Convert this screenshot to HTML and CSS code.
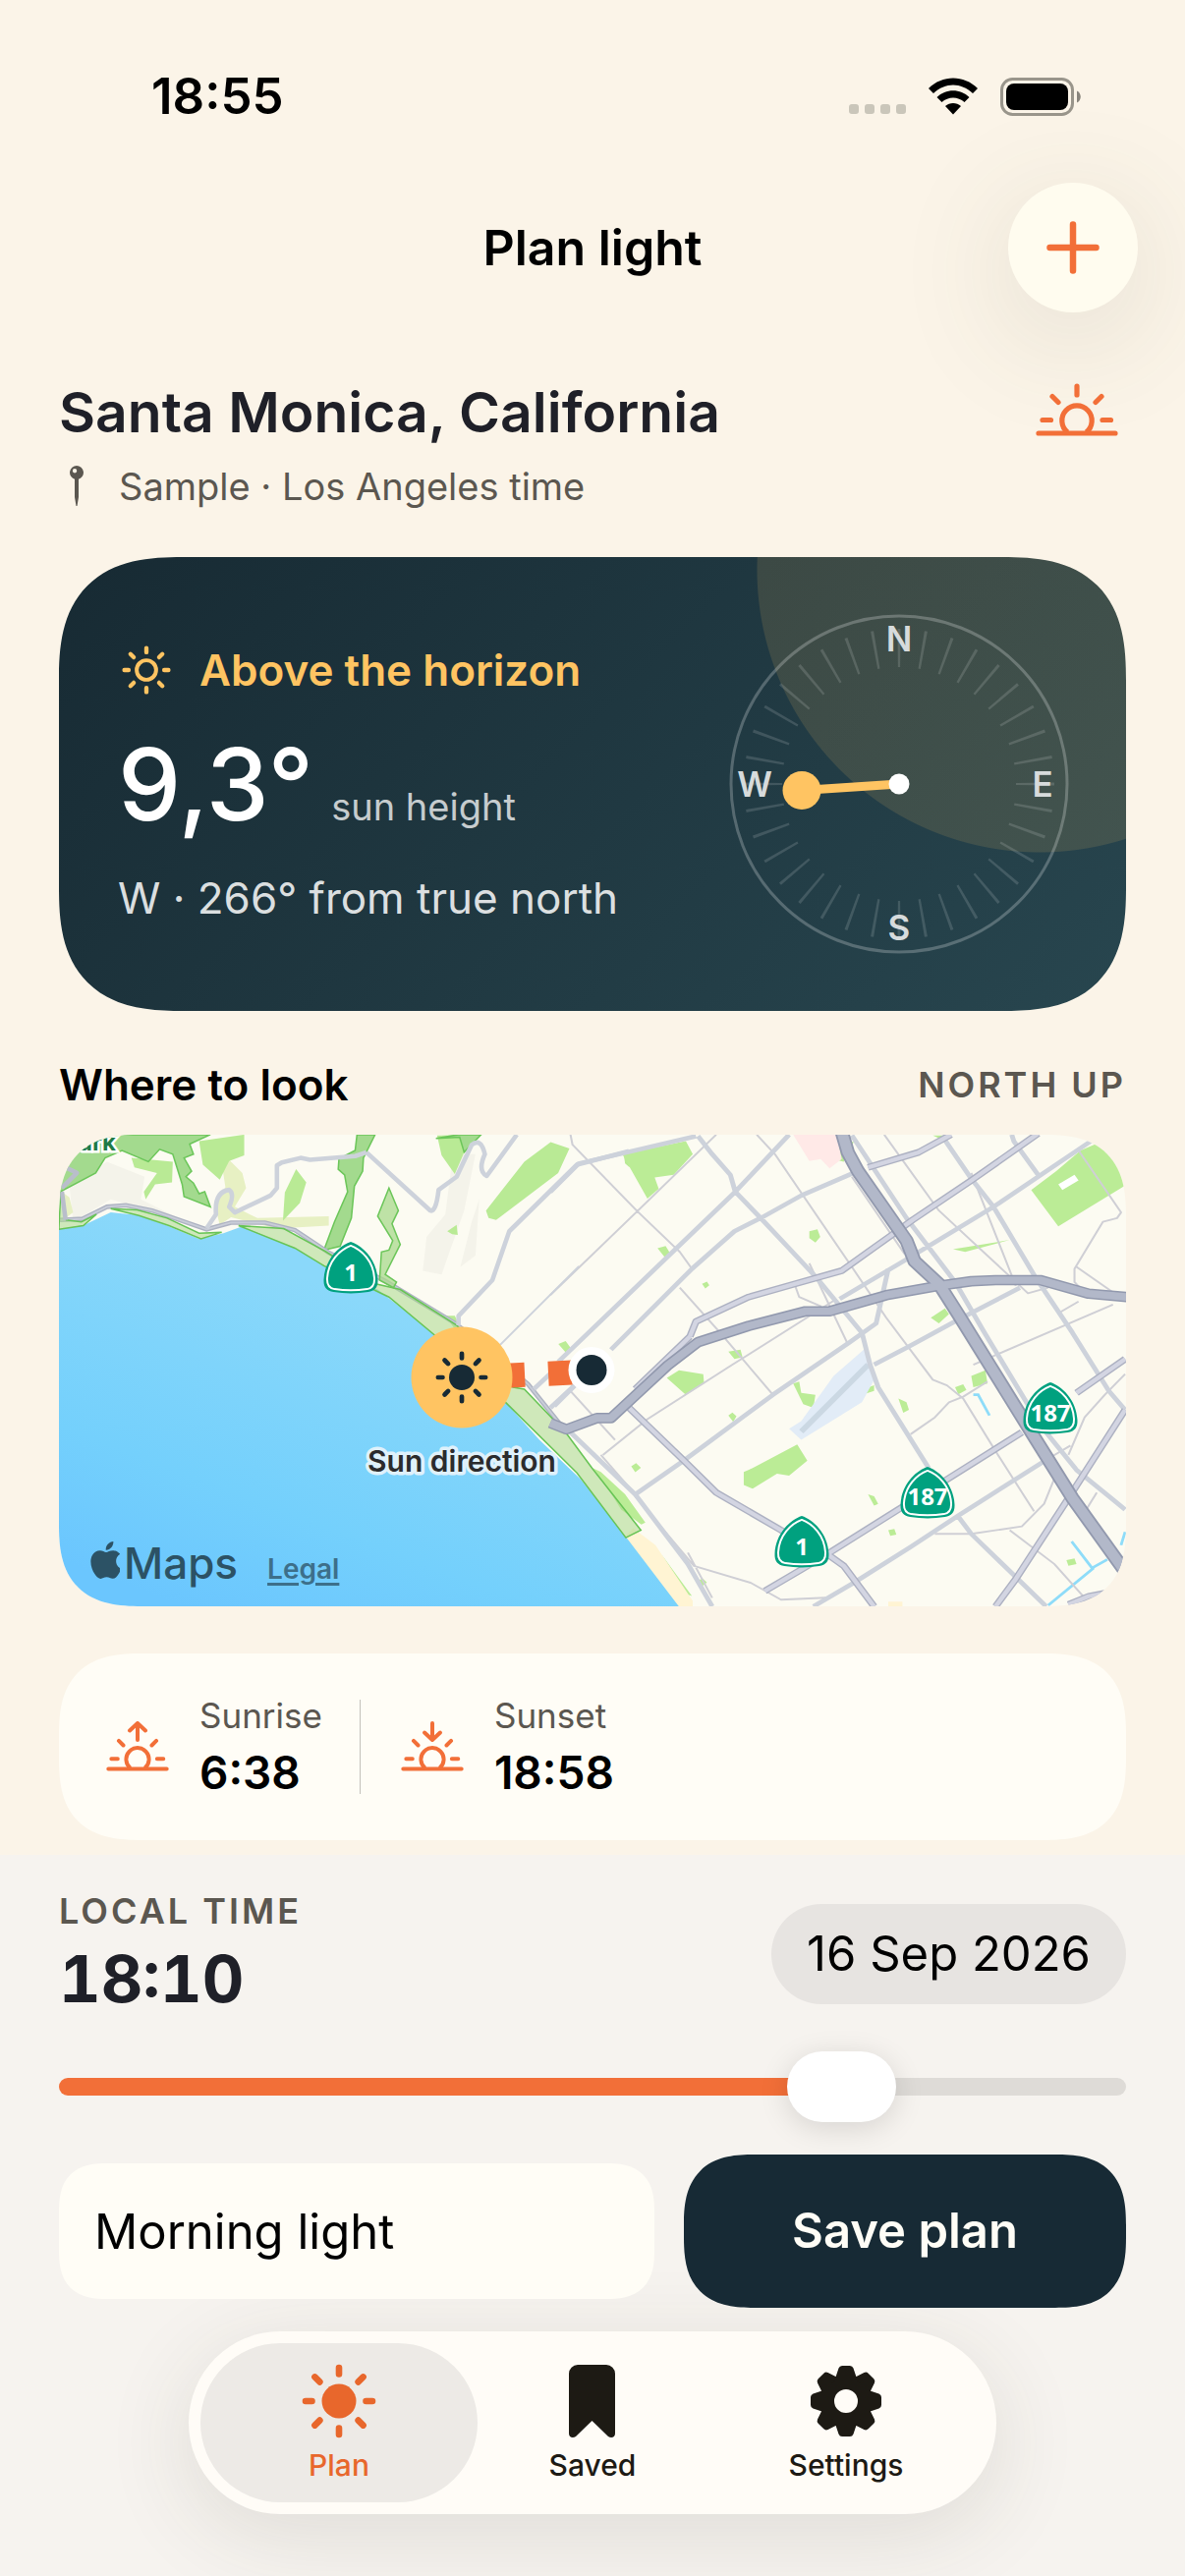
FILE: index.html
```html
<!DOCTYPE html>
<html lang="en">
<head>
<meta charset="utf-8">
<meta name="viewport" content="width=device-width, initial-scale=1">
<title>Plan light</title>
<link rel="stylesheet" href="styles.css">
</head>
<body>
<svg class="defs" aria-hidden="true">
  <defs>
    <symbol id="sun-rays" viewBox="0 0 76 76">
      <g fill="none" stroke="currentColor" stroke-width="6.6" stroke-linecap="round">
        <path d="M38 4v6.500M38 65.500v6.500M4 38h6.500M65.500 38h6.500M13.400 13.400l5 5M57.600 57.600l5 5M13.400 62.600l5-5M57.600 18.400l5-5"/>
      </g>
    </symbol>
    <symbol id="half-sun" viewBox="0 0 84 44">
      <g fill="none" stroke="currentColor" stroke-width="5.200" stroke-linecap="round">
        <path d="M3 41h78M7 27.500h8.500M68 27.500h8.500M17 3.500l6 6M67 3.500l-6 6"/>
        <path d="M32.500 40a15.200 15.200 0 1 1 19 0" stroke-linecap="butt"/>
      </g>
    </symbol>
    <symbol id="shield" viewBox="0 0 56 54">
      <path d="M28 0C40 4 55 18 56 39c.4 8-3 12-10 13-12 2-24 2-36 0C3 51-.4 47 0 39 1 18 16 4 28 0z" fill="#00a17f"/>
      <path d="M28 4C39 8 51.500 20 52.500 38c.3 7-2 10-7.500 11-11 1.600-23 1.600-34 0-5.500-1-7.800-4-7.500-11C4.500 20 17 8 28 4z" fill="none" stroke="#fff" stroke-width="2"/>
    </symbol>
    <linearGradient id="sea" x1="0.8" y1="0" x2="0.2" y2="1">
      <stop offset="0.3" stop-color="#8ad8fa"/>
      <stop offset="0.75" stop-color="#74d0fc"/>
      <stop offset="1" stop-color="#6bc6fe"/>
    </linearGradient>
  </defs>
</svg>

<div class="screen">
  <div class="status">
    <span class="status-time">18:55</span>
    <div class="status-icons">
      <span class="signal"><i></i><i></i><i></i><i></i></span>
      <svg class="wifi" viewBox="0 0 52 38" aria-hidden="true">
        <path d="M1 11C15-3 37-3 51 11l-5 5C34 4.500 18 4.500 6 16z"/>
        <path d="M9.500 20c9-9 24-9 33 0l-5 5c-6.500-6-16.500-6-23 0z"/>
        <path d="M18 29c4.500-4 11.500-4 16 0l-8 8.500z"/>
      </svg>
      <svg class="battery" viewBox="0 0 82 39" aria-hidden="true">
        <rect x="1.500" y="1.500" width="72" height="36" rx="11" fill="none" stroke="#99958b" stroke-width="3"/>
        <rect x="6" y="6" width="63" height="27" rx="8"/>
        <path d="M78 13.500c5 2 5 10 0 12z" fill="#88847c"/>
      </svg>
    </div>
  </div>

  <header class="topbar">
    <h1>Plan light</h1>
    <button class="add" type="button" aria-label="Add place">
      <svg viewBox="0 0 54 54" aria-hidden="true"><path d="M27 3.500v47M3.500 27h47" stroke="currentColor" stroke-width="6.500" stroke-linecap="round"/></svg>
    </button>
  </header>

  <main class="content">
    <section class="place">
      <div class="place-head">
        <h2>Santa Monica, California</h2>
        <svg class="horizon-icon" viewBox="0 0 84 60" aria-hidden="true">
          <use href="#half-sun" x="0" y="10" width="84" height="44"/>
          <path d="M42 3v9" fill="none" stroke="currentColor" stroke-width="5.200" stroke-linecap="round"/>
        </svg>
      </div>
      <p class="place-sub">
        <svg class="pin" viewBox="0 0 14 42" aria-hidden="true">
          <path fill-rule="evenodd" d="M7 0a7 7 0 0 1 2 13.700V32L7.500 41h-1L5 32V13.700A7 7 0 0 1 7 0zM5 3a2.200 2.200 0 1 0 .1 4.400A2.200 2.200 0 0 0 5 3z"/>
        </svg>
        <span>Sample · Los Angeles time</span>
      </p>
    </section>

    <section class="sun-card">
      <div class="sun-info">
        <p class="sun-state">
          <svg viewBox="-6 -6 88 88" aria-hidden="true"><use href="#sun-rays" width="76" height="76"/><circle cx="38" cy="38" r="15" fill="none" stroke="currentColor" stroke-width="6"/></svg>
          <span>Above the horizon</span>
        </p>
        <p class="sun-height"><strong>9,3°</strong> <span>sun height</span></p>
        <p class="sun-bearing">W · 266° from true north</p>
      </div>
      <svg class="compass" viewBox="0 0 346 346" role="img" aria-label="Compass">
        <circle cx="173" cy="173" r="171" fill="none" stroke="#fff" stroke-opacity=".24" stroke-width="3"/>
        <circle cx="173" cy="173" r="138.500" fill="none" stroke="#fff" stroke-opacity=".14" stroke-width="39" pathLength="360" stroke-dasharray="1.100 8.900" stroke-dashoffset=".55"/>
        <g class="compass-labels">
          <text x="173" y="38">N</text>
          <text x="173" y="332">S</text>
          <text x="26" y="186">W</text>
          <text x="319" y="186">E</text>
        </g>
        <path d="M173 173L74 179.500" stroke="#ffc462" stroke-width="9"/>
        <circle cx="74" cy="179.500" r="19.500" fill="#ffc462"/>
        <circle cx="173" cy="173" r="10.500" fill="#fff"/>
      </svg>
    </section>

    <section class="look">
      <div class="look-head">
        <h3>Where to look</h3>
        <span class="caps">North up</span>
      </div>
      <div class="map">
        <svg class="map-art" viewBox="0 0 1086 480" preserveAspectRatio="xMidYMid slice" role="img" aria-label="Map of Santa Monica">
          <rect width="1086" height="480" fill="#fcfbf2"/>
          <g transform="translate(-20 -95) scale(.38265)">
            <path fill="#f4f3ea" d="M1100 300l60 0-30 150-60 170-50-10 10-90 50-60zM80 380l100-60 100 40-10 60 100 50-180-50-100 60zM1120 600l30-120 20-60-10 150z"/>
            <path fill="#e7f0c3" d="M480 290l60 60 10 40-30 50 60 30 190-5v25l-140 8-120-30-30 20-15-60 30-40zM60 400l20 15 10 40-20 15z"/>
            <path fill="#b9ea95" d="M425 265l120-17v55l-40 15-25 50-45-40zM245 310l110 10-2 55-45 5-25 40-5-20 35-50-60-15zM683 340l27 35-17 55-45 47 5-75zM1058 250l110-2-38 47-25 58-35-50zM1188 450l102-130 70-52 50 17-30 65-165 125-20-5zM1555 305l15-5v35l-12-10zM1085 505l25-17 3 27-15-2zM1080 730h25l10 20-10 15z"/>
            <path fill="#a3da8e" stroke="#6cc65a" stroke-width="4" d="M55 400l5-65 40-50 100-37h255l-55 25 10 27-25 10 20 35-15 15 20 17 15 28 15-5 15 40-70-27-5-33-25-80-35-13-30 33-70-30-45 20-25 40z"/>
            <path fill="#a3da8e" stroke="#6cc65a" stroke-width="4" d="M845 248h48l-31 62-2 35-22 40-8 85-30 75-43 10 28-75 35-80-8-45-17-15 2-28 43-22zM1055 258l60-10h60l-45 47-12-40z"/>
          </g>
          <g transform="translate(500 -95) scale(.412 .38265)">
            <path fill="#bbec96" d="M178 300l157-35 17 35-47 55-47 7 10 30-28 26zM1188 395l62-50 60-55 40-18 50 38 22 72-167 110zM478 1145l22-10 110-63 25 43-45 40-30-5-60 40-22-10zM288 895l30-20 60 10 2 25-45 30zM640 505l20-5 7 20-12 15-15-12zM265 550l20-6 10 18-12 12zM375 645l12-6 6 10-10 8zM440 825l30-5 5 20-20 5zM20 805l18-8 12 18-12 12zM600 910l15-5 5 30 35 5-5 35-25-10zM760 930l40-15v15l-30 10zM860 950l20 10 6 20-14 8zM940 735l35-25 10 15-25 25zM1040 890l35-15 5 35-35 10zM1000 920l20-8 8 15-20 12zM995 553l140-25-110 32zM440 995l10-8 10 10-8 15zM200 1130l12-8 12 12-14 12zM785 1205l15 5 10 20-10 5zM835 1300l15-3 5 15-15 3zM1275 1380l20-5 5 15-20 5zM362 1435l15-6 10 10-12 10zM105 1135l20 10 60 60 50 75-10 5-50-40-35-60zM275 1365l75 110-15-5zM700 290l50-25-5 15-20 40-20-5zM610 250h40l-15 15zM945 250h30l-10 10z"/>
            <path fill="#fff" d="M1255 380l40-25 10 15-40 25z"/>
            <path fill="#ffe9e7" d="M600 248h108l12 65-30 25-22-25-28 5-20-35z"/>
            <path fill="#e2ecf7" d="M590 1030l30-20 80-120 80-75 20 85-30 60-90 60-60 40z"/>
            <path stroke="#cbd8e3" stroke-width="14" d="M620 1038L785 860"/>
            <path fill="none" stroke="#8edcf9" stroke-width="7" d="M1230 1500l110-97-52-73M1340 1400l36-22M1045 940l12 0 28 55M1420 1305l-10 35"/>
            <path fill="#fff4d3" d="M205 1295l55 45 92 148v15h-42L183 1318zM835 1490l35 0v15h-35z"/>
          </g>
          <g transform="translate(-20 -95) scale(.38265)">
            <path fill="url(#sea)" d="M52 500l68-12 70-33 70 7 80 28 85 35 65-15 50-18 80 33 70 30 67 42 143 63 70 55 80 65 190 180 90 100 110 105 120 153 141 185H52z"/>
            <path fill="none" stroke="#aeb3c2" stroke-width="12" d="M55 475l60-3 65-32 50-4 70 14 145 50 65-18h90l80 20 90 60 150 75 190 115 190 160 100 125"/>
            <path fill="none" stroke="#c9cdd8" stroke-width="5" d="M55 475l60-3 65-32 50-4 70 14 145 50 65-18h90l80 20 90 60 150 75 190 115 190 160 100 125"/>
            <path fill="#a9d98c" fill-opacity=".55" stroke="#67c455" stroke-width="4" d="M530 490l120 8 110 60 140 88 60 14 150 95 150 165 30 5 110 115 70 95 130 165-40 20-130-172-190-188-190-180-120-100-173-83-77-47zM190 445l70 3 80 22 85 40 60-2-55 17-85-35-80-27zM52 500l5-100 15 75 40 5 40-20-35 30z"/>
            <path fill="#a9d98c" fill-opacity=".75" stroke="#6cc65a" stroke-width="4" d="M930 390l25 60-17 35 22 55-40 80 30 20-8 15-37-20 5-75 20-5 10-25-40-65z"/>
          </g>
          <g fill="none" stroke-linejoin="round">
            <g stroke="#cfcfd5" stroke-width="5" transform="translate(500 -95) scale(.412 .38265)">
              <path d="M50 248l5 27 160 177 105 108 30 45M0 675l215-223 195-204M320 655l100 120 130 165M510 248l45 52 190 300 85 135 115 165 35 15 40 35 80 140 95 160M240 1005l210-145 250-170M605 650l10 30 55 25M825 248l135 202 160 160 60 60 50-15M130 1100l110-95M160 1060L50 930M125 1100l85 105M210 1210l145 185 140 45 75 45 110-5M890 1045l60-45 35-40 35-15 60-40M950 1310h90l125-20 55-60 30-80M1305 290l105 165-10 15-35 10-70 125v35l35 40 90 8M1300 600l120 90M1045 860l345-160M1135 1300l110 90 75 90M1420 885l-50 55-50 60-40 100M745 360l130 205M640 590l95 215M1040 350l110 300M400 1480l-60-120M1260 720l45-28M1350 1200l-40 70M1230 1110l55-35"/>
            </g>
            <g stroke="#cdd2db" stroke-width="12" transform="translate(500 -95) scale(.412 .38265)">
              <path d="M0 400l70-75 290-73M20 852L457 400l133-152M150 820l200-215 105-100 65-35 100-60 125-58M0 975l60-60M365 252l35 48 45 55 12 45 63 70 135 155 115 150 20 85 20 60 125 215M1005 1260l35 50 185 193M210 1205l120-90 220-175 190-140 65-50 30-145M715 685l165-105 215-140 245-178M800 860l85-48 115-67 160-90M745 250l135 220 120 170 70 130 140 250 90 120 120 105M970 255l70 110 55 75 105 190 90 145 90 155 40 50M1140 248l5 17 60 90M650 1503l100-63 140-95 120-85 205-140M50 1040l160 165 130 185 60 113"/>
            </g>
            <g stroke="#cdd2db" stroke-width="12" transform="translate(-20 -95) scale(.38265)">
              <path d="M870 295l170 155q15 5 22-55l48-35 40-85q25-20 35 25-20 45 5 58l80-110M445 497l25-37q-5-60 35-65 15 10 0 45l15 15 95-45 17-20v-60l13-8 50-12 25 5 120-10 30-10M1115 755v-25l90-95 45-130 180-177 138-36M1315 925l80-75M1370 970l60-60"/>
              <path stroke-width="5" d="M1225 808l210-210"/>
              <path stroke="#b9becb" d="M60 400l10 75M60 390l40-40-30-15"/>
            </g>
            <g transform="translate(500 -95) scale(.412 .38265)">
              <g stroke="#adb1c2" stroke-width="18">
                <path id="arterials" d="M345 785l15-40 130-65 115-35 115-35 130-100 45-35 145-105 165-125M785 335l125-40 80-47M195 975l135 140 80 85 160 100 120 68 35 27 75 108M530 1462l90-57 70-45 170-115 120-80 185-125M1300 935l120-90M1420 980l-140 235-130 215-50 73M1280 1498l50-22 40-8M345 785l-135 140"/>
              </g>
              <use href="#arterials" stroke="#d3d5e2" stroke-width="11"/>
              <g stroke="#9299ae">
                <path stroke-width="28" d="M0 1015l40 17 75-30 35 0 60-60 80-80 75-62 125-43 140-39h60l140-43 130-25 80-12 60-3h110l120 36 95 9"/>
                <path stroke-width="35" d="M720 240l15 55 25 50 120 185 20 55 60 60 50 85 190 330 90 155 130 195"/>
              </g>
              <g stroke="#b2b8c9">
                <path stroke-width="20" d="M0 1015l40 17 75-30 35 0 60-60 80-80 75-62 125-43 140-39h60l140-43 130-25 80-12 60-3h110l120 36 95 9"/>
                <path stroke-width="26" d="M720 240l15 55 25 50 120 185 20 55 60 60 50 85 190 330 90 155 130 195"/>
              </g>
            </g>
          </g>
          <path fill="none" stroke="#f26f38" stroke-width="25" stroke-dasharray="24 24" d="M522 242L430 246.500"/>
          <circle cx="542" cy="239.500" r="23.500" fill="#fff"/>
          <circle cx="542" cy="239.500" r="15.500" fill="#172a35"/>
          <circle cx="410" cy="247" r="51.500" fill="#ffc462"/>
          <g color="#172a35">
            <circle cx="410" cy="247" r="13" fill="currentColor"/>
            <use href="#sun-rays" x="383" y="220" width="54" height="54"/>
          </g>
          <use href="#shield" x="269" y="109" width="56" height="53"/>
          <use href="#shield" x="728" y="388" width="56" height="53"/>
          <use href="#shield" x="855" y="338" width="58" height="53"/>
          <use href="#shield" x="980" y="252" width="58" height="53"/>
          <g class="route">
            <text x="297" y="149">1</text>
            <text x="756" y="428">1</text>
            <text x="884" y="377">187</text>
            <text x="1009" y="292">187</text>
          </g>
          <text class="park-label" x="58" y="16">Park</text>
          <text class="marker-label" x="410" y="343">Sun direction</text>
        </svg>
        <div class="map-credit">
          <span class="brand">
            <svg viewBox="2 0 19 24" aria-hidden="true"><path d="M12.152 6.896c-.948 0-2.415-1.078-3.960-1.040-2.040.027-3.910 1.183-4.961 3.014-2.117 3.675-.546 9.103 1.519 12.090 1.013 1.454 2.208 3.090 3.792 3.039 1.520-.065 2.090-.987 3.935-.987 1.831 0 2.350.987 3.960.948 1.637-.026 2.676-1.480 3.676-2.948 1.156-1.688 1.636-3.325 1.662-3.415-.039-.013-3.182-1.221-3.220-4.857-.026-3.040 2.480-4.494 2.597-4.559-1.429-2.090-3.623-2.324-4.390-2.376-2-.156-3.675 1.090-4.610 1.090zM15.530 3.830c.843-1.012 1.400-2.427 1.245-3.830-1.207.052-2.662.805-3.532 1.818-.780.896-1.454 2.338-1.273 3.714 1.338.104 2.715-.688 3.559-1.701"/></svg>
            <span>Maps</span>
          </span>
          <a href="#legal">Legal</a>
        </div>
      </div>
    </section>

    <section class="times">
      <div class="time-item">
        <svg viewBox="0 0 64 52" aria-hidden="true">
          <use href="#half-sun" x="0" y="17" width="64" height="34"/>
          <path d="M32 2v17M24 9.500L32 2l8 7.500" fill="none" stroke="currentColor" stroke-width="4" stroke-linecap="round" stroke-linejoin="round"/>
        </svg>
        <p><span>Sunrise</span><strong>6:38</strong></p>
      </div>
      <div class="time-item">
        <svg viewBox="0 0 64 52" aria-hidden="true">
          <use href="#half-sun" x="0" y="17" width="64" height="34"/>
          <path d="M32 2v17M24 11.500L32 19l8-7.500" fill="none" stroke="currentColor" stroke-width="4" stroke-linecap="round" stroke-linejoin="round"/>
        </svg>
        <p><span>Sunset</span><strong>18:58</strong></p>
      </div>
    </section>
  </main>

  <footer class="tray">
    <div class="tray-row">
      <div class="local">
        <label class="caps" for="time">Local time</label>
        <output for="time">18:10</output>
      </div>
      <button class="date" type="button">16 Sep 2026</button>
    </div>
    <input class="slider" id="time" type="range" min="0" max="1440" value="1095">
    <form class="save-row">
      <input class="name" type="text" value="Morning light" aria-label="Plan name">
      <button class="save" type="button">Save plan</button>
    </form>
    <nav class="tabs">
      <a class="tab active" href="#plan">
        <svg viewBox="0 0 76 76" aria-hidden="true"><use href="#sun-rays"/><circle cx="38" cy="38" r="17.500" fill="currentColor"/></svg>
        <span>Plan</span>
      </a>
      <a class="tab" href="#saved">
        <svg viewBox="-14 -1 76 76" aria-hidden="true"><path fill="currentColor" d="M9 0h29a9 9 0 0 1 9 9v61c0 4-4 5-7 3L23.500 57 7 73c-3 2-7 1-7-3V9a9 9 0 0 1 9-9z"/></svg>
        <span>Saved</span>
      </a>
      <a class="tab" href="#settings">
        <svg viewBox="-38 -38 76 76" aria-hidden="true">
          <circle r="19.500" fill="none" stroke="currentColor" stroke-width="15"/>
          <g fill="currentColor">
            <path id="cog-teeth" d="M-11-23l3.500-10.500Q-6.500-36-4-36h8q2.500 0 3.500 2.500L11-23zM-11 23l3.500 10.500Q-6.500 36-4 36h8q2.500 0 3.500-2.500L11 23z"/>
            <use href="#cog-teeth" transform="rotate(45)"/>
            <use href="#cog-teeth" transform="rotate(90)"/>
            <use href="#cog-teeth" transform="rotate(135)"/>
          </g>
        </svg>
        <span>Settings</span>
      </a>
    </nav>
  </footer>
</div>
</body>
</html>
```
FILE: styles.css
```css
:root {
  --cream: #fbf4e8;
  --paper: #fffdf6;
  --ink: #1f2028;
  --muted: #5b5750;
  --navy: #172a35;
  --orange: #f26f38;
  --amber: #ffc462;
}

* {
  box-sizing: border-box;
}

body {
  margin: 0;
  background: var(--cream);
  color: #000;
  font-family: Inter, "Liberation Sans", sans-serif;
  font-size: 45px;
  line-height: 60px;
}

h1, h2, h3, p {
  margin: 0;
  font-weight: 600;
}

button, input {
  margin: 0;
  border: 0;
  font: inherit;
  color: inherit;
}

svg {
  display: block;
  flex: none;
}

.defs {
  position: absolute;
  width: 0;
  height: 0;
}

.screen {
  display: flex;
  flex-direction: column;
  min-height: 100vh;
}

/* Status bar */
.status {
  display: flex;
  justify-content: space-between;
  align-items: center;
  padding: 68px 106px 58px 154px;
}

.status-time {
  font-size: 51px;
  font-weight: 600;
}

.status-icons {
  display: flex;
  align-items: center;
  gap: 22px;
}

.signal {
  display: flex;
  align-self: flex-end;
  gap: 6px;
  padding-bottom: 2px;
}

.signal i {
  width: 10px;
  height: 10px;
  border-radius: 3px;
  background: #cac6ba;
}

.wifi {
  width: 52px;
  height: 38px;
}

.battery {
  width: 82px;
  height: 39px;
}

/* Title bar */
.topbar {
  display: grid;
  grid-template-columns: 132px 1fr 132px;
  align-items: center;
  padding: 0 48px;
}

.topbar h1 {
  grid-column: 2;
  text-align: center;
  font-size: 50px;
}

.add {
  display: grid;
  place-items: center;
  width: 132px;
  height: 132px;
  padding: 0;
  border-radius: 50%;
  background: #fffcef;
  color: var(--orange);
  box-shadow: 0 24px 120px rgba(80, 90, 60, 0.15);
}

.add svg {
  width: 54px;
}

/* Content */
.content {
  padding: 66px 60px 15px;
}

.place-head {
  display: flex;
  justify-content: space-between;
  align-items: center;
  padding-right: 8px;
}

.place h2 {
  font-size: 57px;
  line-height: 72px;
  color: var(--ink);
}

.horizon-icon {
  width: 84px;
  color: var(--orange);
}

.place-sub {
  display: flex;
  align-items: center;
  gap: 36px;
  margin: 15px 0 48px;
  padding-left: 11px;
  font-size: 38px;
  font-weight: 400;
  line-height: 48px;
  color: var(--muted);
}

.pin {
  width: 14px;
  fill: currentColor;
}

.sun-card {
  display: flex;
  justify-content: space-between;
  align-items: center;
  padding: 58px 58px 58px 60px;
  border-radius: 90px;
  background:
    radial-gradient(circle at calc(100% - 88px) 13px, rgba(255, 196, 98, 0.13) 287px, transparent 288px),
    linear-gradient(135deg, #172a33, #28464f);
  color: #fff;
}

.sun-info {
  display: flex;
  flex-direction: column;
  gap: 26px;
}

.sun-state {
  display: flex;
  align-items: center;
  gap: 25px;
  color: var(--amber);
  font-size: 44px;
}

.sun-state svg {
  width: 58px;
}

.sun-height {
  display: flex;
  align-items: baseline;
  gap: 18px;
  color: rgba(255, 255, 255, 0.75);
}

.sun-height strong {
  font-size: 102px;
  font-weight: 500;
  line-height: 120px;
  color: #fff;
}

.sun-height span {
  font-size: 38px;
  font-weight: 400;
  line-height: 48px;
}

.sun-bearing {
  font-weight: 400;
  font-size: 44px;
  color: rgba(255, 255, 255, 0.86);
}

.compass {
  width: 346px;
  height: 346px;
}

.compass-labels {
  fill: #d7dbdc;
  font-size: 35px;
  font-weight: 600;
  text-anchor: middle;
}

/* Map */
.look-head {
  display: flex;
  justify-content: space-between;
  align-items: center;
  margin: 45px 0 21px;
}

.look-head h3 {
  font-size: 44px;
}

.caps {
  font-size: 36px;
  font-weight: 600;
  line-height: 48px;
  letter-spacing: 3px;
  text-transform: uppercase;
  color: var(--muted);
}

.map {
  position: relative;
  overflow: hidden;
  border-radius: 64px;
}

.map-art {
  width: 100%;
  height: auto;
}

.route {
  fill: #fff;
  font-family: "Open Sans", "Noto Sans", sans-serif;
  font-size: 24px;
  font-weight: 700;
  text-anchor: middle;
}

.park-label {
  fill: #1f7a47;
  stroke: #fff;
  stroke-width: 5px;
  paint-order: stroke;
  font-size: 24px;
  font-weight: 700;
  text-anchor: end;
}

.marker-label {
  fill: #2b2b2d;
  stroke: #dff1fb;
  stroke-width: 7px;
  stroke-linejoin: round;
  paint-order: stroke;
  font-size: 30px;
  font-weight: 600;
  text-anchor: middle;
}

.map-credit {
  position: absolute;
  left: 32px;
  bottom: 8px;
  display: flex;
  align-items: baseline;
  gap: 30px;
  color: #2c5265;
}

.brand {
  display: flex;
  align-items: center;
  gap: 4px;
  font-size: 44px;
  font-weight: 500;
  line-height: 60px;
}

.brand svg {
  width: 30px;
  margin-bottom: 6px;
  fill: currentColor;
}

.map-credit a {
  font-size: 28px;
  font-weight: 600;
  color: #3d6f8a;
  text-underline-offset: 4px;
  text-decoration-thickness: 3px;
}

/* Sunrise and sunset */
.times {
  display: flex;
  align-items: center;
  margin-top: 48px;
  padding: 39px 48px;
  border-radius: 60px;
  background: var(--paper);
}

.time-item {
  display: flex;
  align-items: center;
  gap: 31px;
}

.time-item svg {
  width: 64px;
  color: var(--orange);
}

.time-item + .time-item {
  position: relative;
  padding-left: 80px;
}

.time-item + .time-item::before {
  content: "";
  position: absolute;
  left: 38px;
  top: 8px;
  bottom: 8px;
  width: 1px;
  background: #c3c1bb;
}

.time-item p {
  display: flex;
  flex-direction: column;
  gap: 4px;
}

.time-item span {
  font-size: 35px;
  font-weight: 400;
  line-height: 48px;
  color: var(--muted);
}

.time-item strong {
  font-size: 46px;
  font-weight: 600;
}

/* Time tray */
.tray {
  flex: 1;
  padding: 33px 60px 62px;
  background: #f6f3ef;
}

.tray-row {
  display: flex;
  justify-content: space-between;
  align-items: center;
}

.local {
  display: flex;
  flex-direction: column;
  gap: 3px;
}

.local output {
  font-size: 66px;
  font-weight: 700;
  font-variant-numeric: tabular-nums;
  line-height: 84px;
  color: var(--ink);
}

.date {
  padding: 21px 36px;
  border-radius: 51px;
  background: #e7e4e1;
  font-size: 49px;
}

.slider {
  appearance: none;
  display: block;
  width: 100%;
  height: 72px;
  margin: 32px 0 33px;
  background: transparent;
}

.slider::-webkit-slider-runnable-track {
  height: 18px;
  border-radius: 9px;
  background: linear-gradient(90deg, var(--orange) 76%, #dedbd7 76%);
}

.slider::-webkit-slider-thumb {
  appearance: none;
  width: 111px;
  height: 72px;
  margin-top: -27px;
  border-radius: 36px;
  background: #fff;
  box-shadow: 0 6px 30px rgba(0, 0, 0, 0.13);
}

.save-row {
  display: grid;
  grid-template-columns: 606fr 450fr;
  align-items: center;
  gap: 30px;
  margin-bottom: 24px;
}

.name {
  width: 100%;
  min-width: 0;
  height: 138px;
  padding: 0 36px;
  border-radius: 40px;
  background: var(--paper);
  font-size: 49px;
}

.save {
  height: 156px;
  padding: 0;
  border-radius: 56px;
  background: var(--navy);
  color: var(--paper);
  font-size: 49px;
  font-weight: 600;
}

/* Tab bar */
.tabs {
  display: flex;
  width: fit-content;
  margin: 0 auto;
  padding: 12px;
  border-radius: 93px;
  background: #fffcf7;
  box-shadow: 0 20px 90px rgba(60, 55, 45, 0.12);
}

.tab {
  display: flex;
  flex-direction: column;
  align-items: center;
  gap: 8px;
  width: 282px;
  padding: 21px 0 19px;
  border-radius: 81px;
  color: #1d1a14;
  font-size: 30px;
  font-weight: 500;
  line-height: 38px;
  text-decoration: none;
}

.tab + .tab {
  margin-left: -24px;
}

.tab svg {
  width: 76px;
}

.tab.active {
  background: #edeae6;
  color: #e8672c;
}

/* Continuous corners where the browser draws them */
@supports (corner-shape: squircle) {
  .sun-card {
    border-radius: 126px;
    corner-shape: superellipse(1.4);
  }

  .map,
  .times {
    border-radius: 84px;
    corner-shape: superellipse(1.4);
  }

  .save {
    border-radius: 72px;
    corner-shape: superellipse(1.4);
  }

  .name {
    border-radius: 50px;
    corner-shape: superellipse(1.4);
  }
}
```
